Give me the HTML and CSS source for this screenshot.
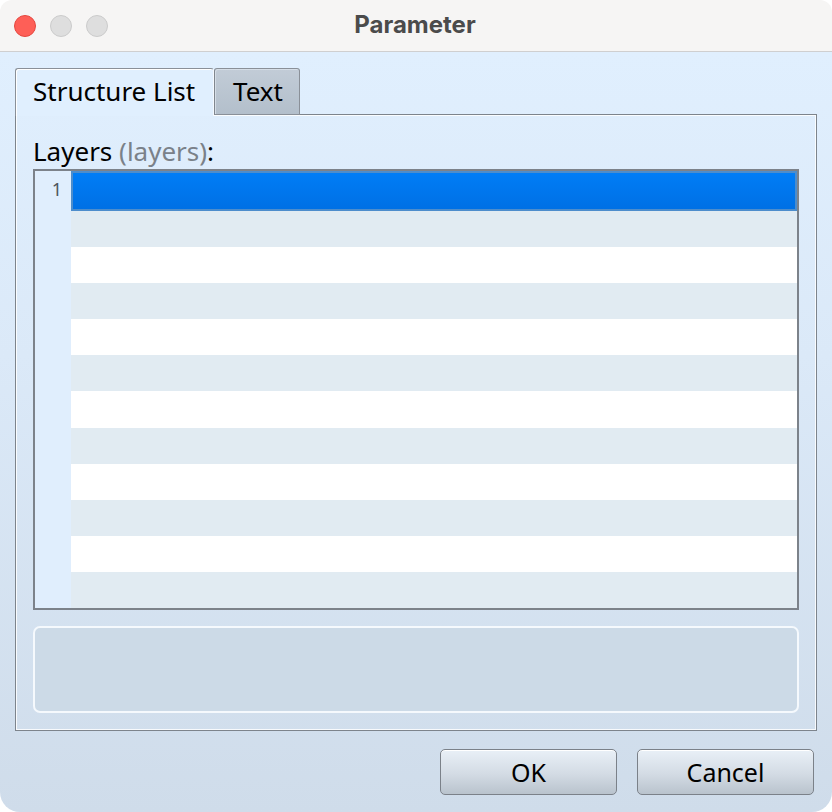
FILE: index.html
```html
<!DOCTYPE html>
<html>
<head>
<meta charset="utf-8">
<link rel="stylesheet" href="styles.css">
</head>
<body>
<div class="window">
  <div class="titlebar">
    <div class="lights">
      <span class="light red"></span>
      <span class="light gray"></span>
      <span class="light gray"></span>
    </div>
    <div class="title">Parameter</div>
    <div></div>
  </div>
  <div class="content">
    <div class="tabs">
      <div class="tab active">Structure List</div>
      <div class="tab">Text</div>
    </div>
    <div class="panel">
      <div class="label">Layers <span class="hint">(layers)</span>:</div>
      <div class="list">
        <div class="gutter"><span class="num">1</span></div>
        <div class="rows">
          <div class="row selected"></div>
          <div class="row odd"></div>
          <div class="row"></div>
          <div class="row odd"></div>
          <div class="row"></div>
          <div class="row odd"></div>
          <div class="row"></div>
          <div class="row odd"></div>
          <div class="row"></div>
          <div class="row odd"></div>
          <div class="row"></div>
          <div class="row odd"></div>
        </div>
      </div>
      <div class="desc"></div>
    </div>
    <div class="buttons">
      <button class="btn">OK</button>
      <button class="btn">Cancel</button>
    </div>
  </div>
</div>
</body>
</html>
```
FILE: styles.css
```css
* { box-sizing: border-box; }
html, body { margin: 0; padding: 0; background: #ffffff; }
body { width: 832px; height: 812px; overflow: hidden; font-family: "Noto Sans", "Open Sans", sans-serif; }

.window {
  width: 832px;
  height: 812px;
  border-radius: 12px 12px 20px 20px;
  overflow: hidden;
  display: flex;
  flex-direction: column;
}

.titlebar {
  height: 52px;
  flex: none;
  background: #f6f5f4;
  border-bottom: 1px solid #cfcfd0;
  display: grid;
  grid-template-columns: 1fr auto 1fr;
  align-items: center;
}
.lights { display: flex; gap: 14px; padding-left: 14px; }
.light { width: 22px; height: 22px; border-radius: 50%; display: block; }
.light.red { background: #fe5f57; border: 1px solid #e5473f; }
.light.gray { background: #dedede; border: 1px solid #cbcbcb; }
.title {
  font-family: "Inter", "Roboto", sans-serif;
  font-weight: 700;
  font-size: 24px;
  color: #4b4b4b;
  margin-top: -3px;
  margin-left: -2px;
}

.content {
  flex: 1;
  background: linear-gradient(#e0effe 0%, #dbe9f8 40%, #cfdcea 100%);
  padding: 16px 15px 0 15px;
  display: flex;
  flex-direction: column;
}

.tabs { display: flex; height: 47px; position: relative; z-index: 2; margin-bottom: -1px; }
.tab {
  font-size: 26px;
  line-height: 30px;
  color: #000;
  border: 1px solid #8a9098;
  border-radius: 3px 3px 0 0;
  padding: 7px 18px 0 18px;
  white-space: nowrap;
}
.tab.active {
  width: 199px;
  padding-left: 17px;
  height: 48px;
  border-bottom: none;
  border-right: 1px solid #f4f9ff;
  background: #e0effe;
  box-shadow: inset 1px 1px 0 #ffffff;
}
.tab:not(.active) {
  width: 86px;
  height: 47px;
  background: linear-gradient(#c2ccd7, #b3bfcb);
  box-shadow: inset 1px 1px 0 #d6dee7;
  border-left-color: #7f868e;
}

.panel {
  border: 1px solid #7d848c;
  box-shadow: inset 0 0 0 1px rgba(255, 255, 255, 0.85);
  padding: 21px 17px 17px 17px;
  display: flex;
  flex-direction: column;
}
.label { font-size: 26px; line-height: 30px; color: #000; }
.hint { color: #7a8189; }

.list {
  margin-top: 3px;
  height: 441px;
  border: 2px solid #7c828a;
  display: flex;
}
.gutter {
  width: 36px;
  background: #e0eefd;
  text-align: right;
  padding-right: 9px;
}
.num { display: block; font-size: 18px; line-height: 36px; color: #4e555c; }
.rows { flex: 1; display: flex; flex-direction: column; }
.row { flex: 1; background: #ffffff; }
.row.odd { background: #e1ebf2; }
.row.selected {
  background: linear-gradient(#007df6, #0070e4);
  border: 2px solid #4d8dcc;
}

.desc {
  margin-top: 16px;
  height: 87px;
  border: 2px solid #f5f9fd;
  border-radius: 7px;
  background: #ccdae7;
}

.buttons {
  display: flex;
  justify-content: flex-end;
  gap: 20px;
  margin-top: 18px;
  padding-right: 3px;
}
.btn {
  width: 177px;
  height: 46px;
  font-family: "Noto Sans", sans-serif;
  font-size: 25px;
  color: #000;
  border: 1.5px solid #7b8189;
  border-radius: 5px;
  background: linear-gradient(#e9f0f7, #d3dbe4 55%, #b9c3cd);
  box-shadow: inset 0 1px 0 #ffffff;
  padding: 0;
}
```
